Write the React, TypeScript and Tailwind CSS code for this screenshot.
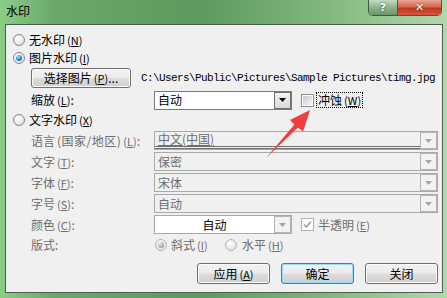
import React from 'react';

const cjk = "font-['Noto_Sans_CJK_SC',sans-serif]";

function Mn({ k }: { k: string }) {
  return (
    <span className="ml-[2px] text-[11px]">
      (<span className="underline">{k}</span>)
    </span>
  );
}

function Radio({ checked, disabled }: { checked?: boolean; disabled?: boolean }) {
  return (
    <span
      className={`flex h-[12px] w-[12px] shrink-0 items-center justify-center rounded-full border bg-[radial-gradient(circle_at_40%_35%,#ffffff,#d6d6d6)] ${
        disabled ? 'border-[#b5b5b5]' : 'border-[#8a8a8a]'
      }`}
    >
      {checked && (
        <span
          className={`h-[6px] w-[6px] rounded-full ${
            disabled
              ? 'bg-[radial-gradient(circle_at_35%_30%,#eeeeee,#9a9a9a_75%)]'
              : 'bg-[radial-gradient(circle_at_35%_30%,#a8e4ff,#1f76c4_65%,#0b4a8e)]'
          }`}
        />
      )}
    </span>
  );
}

function Checkbox({ checked, disabled }: { checked?: boolean; disabled?: boolean }) {
  return (
    <span
      className={`flex h-[13px] w-[13px] shrink-0 items-center justify-center border bg-white ${
        disabled ? 'border-[#b1b1b1]' : 'border-[#8e8f8f]'
      }`}
    >
      {checked ? (
        <svg width="9" height="9" viewBox="0 0 9 9">
          <path d="M1 4.5l2.3 2.5L8 1.5" fill="none" stroke="#a3a3a3" strokeWidth="1.6" />
        </svg>
      ) : (
        <span className="h-[9px] w-[9px] bg-[linear-gradient(135deg,#c6cbd2,#f4f4f4)]" />
      )}
    </span>
  );
}

function Arrow({ disabled }: { disabled?: boolean }) {
  return (
    <span
      className={`flex h-full w-[17px] shrink-0 items-center justify-center border ${
        disabled
          ? 'border-[#b4b4b4] bg-[#f2f2f2]'
          : 'border-[#6f6f6f] bg-[linear-gradient(#f3f3f3,#dadada)]'
      }`}
    >
      <svg width="7" height="4" viewBox="0 0 7 4">
        <path d="M0 0h7L3.5 4z" fill={disabled ? '#a6a6a6' : '#000'} />
      </svg>
    </span>
  );
}

function Select({
  value,
  disabled,
  wide,
  white,
  center,
  doubleLine,
}: {
  value: string;
  disabled?: boolean;
  wide?: boolean;
  white?: boolean;
  center?: boolean;
  doubleLine?: boolean;
}) {
  return (
    <div
      className={`flex h-[19px] items-stretch border ${wide ? 'w-[284px]' : 'w-[138px]'} ${
        disabled ? 'border-[#a9a9a9]' : 'border-[#7a7a7a]'
      } ${white ? 'bg-white' : disabled ? 'bg-[#f0f0f0]' : 'bg-white'}`}
    >
      <div
        className={`flex flex-1 items-center px-[3px] ${center ? 'justify-center' : ''} ${
          disabled && !white ? 'text-[#6d6d6d]' : 'text-black'
        } ${doubleLine ? 'border-b-[3px] border-double border-[#707070]' : ''}`}
      >
        <span className={doubleLine ? 'underline' : ''}>{value}</span>
      </div>
      <Arrow disabled={disabled} />
    </div>
  );
}

function Button({ children, wide, def }: { children: React.ReactNode; wide?: boolean; def?: boolean }) {
  return (
    <div
      className={`flex items-center justify-center rounded-[3px] border bg-[linear-gradient(#f3f3f3_0%,#ebebeb_48%,#dddddd_52%,#cfcfcf_100%)] ${
        wide ? 'h-[20px] w-[100px]' : 'h-[21px] w-[73px]'
      } ${
        def
          ? 'border-[#3c7fb1] shadow-[inset_0_0_0_1px_#98dcfb]'
          : 'border-[#707070] shadow-[inset_0_0_0_1px_#fbfbfb]'
      }`}
    >
      {children}
    </div>
  );
}

function Field({ label, children }: { label: React.ReactNode; children: React.ReactNode }) {
  return (
    <div className="flex h-[21px] items-center pl-[25px] pr-[4px]">
      <div className="w-[123px] shrink-0 whitespace-nowrap text-[#6d6d6d]">{label}</div>
      {children}
    </div>
  );
}

export default function App() {
  return (
    <div
      className={`relative flex h-[298px] w-[447px] flex-col overflow-hidden bg-[linear-gradient(90deg,#8ccd86_0%,#6aa96a_12%,#5c9a5d_45%,#7fb67c_72%,#b2d8ad_100%)] text-[12px] leading-[14px] text-black ${cjk}`}
    >
      {/* Title bar */}
      <div className="flex h-[24px] shrink-0 items-start justify-between">
        <span className="pl-[6px] pt-[4px] text-black">水印</span>
        <div className="mr-[5px] flex h-[16px] overflow-hidden rounded-b-[5px] border border-t-0 border-[#3e5a43]">
          <div className="flex w-[29px] items-center justify-center border-r border-[#3e5a43] bg-[linear-gradient(#c4dcc2,#8fb28e_50%,#6c946c)]">
            <span className="font-['DejaVu_Sans',sans-serif] text-[11px] font-bold leading-[12px] text-white [text-shadow:0_0_2px_#2a3a2a]">
              ?
            </span>
          </div>
          <div className="flex w-[43px] items-center justify-center bg-[linear-gradient(#e9a593,#d46a50_45%,#c0361c_55%,#d4583d)]">
            <span className="font-['DejaVu_Sans',sans-serif] text-[11px] font-bold leading-[12px] text-white [text-shadow:0_0_2px_#5a1a10]">
              ✕
            </span>
          </div>
        </div>
      </div>

      {/* Client area */}
      <div className="ml-[5px] h-[269px] w-[438px] border border-[#4a5f4c] bg-[#f0f0f0] pt-[6px]">
        <div className="flex h-[18px] items-center gap-[4px] pl-[7px]">
          <Radio />
          <span>
            无水印<Mn k="N" />
          </span>
        </div>
        <div className="flex h-[18px] items-center gap-[4px] pl-[7px]">
          <Radio checked />
          <span>
            图片水印<Mn k="I" />
          </span>
        </div>
        <div className="mt-[1px] flex h-[20px] items-center gap-[10px] pl-[25px]">
          <Button wide>
            <span>
              选择图片<Mn k="P" />...
            </span>
          </Button>
          <span className="font-['Liberation_Mono',monospace] text-[11px] tracking-[-0.6px]">
            C:\Users\Public\Pictures\Sample Pictures\timg.jpg
          </span>
        </div>
        <div className="mt-[1px] flex h-[22px] items-center pl-[25px]">
          <div className="w-[123px] shrink-0">
            缩放<Mn k="L" />:
          </div>
          <Select value="自动" />
          <div className="ml-[9px]">
            <Checkbox />
          </div>
          <span className="ml-[2px] border border-dotted border-black px-[1px]">
            冲蚀<Mn k="W" />
          </span>
        </div>
        <div className="flex h-[18px] items-center gap-[4px] pl-[7px]">
          <Radio />
          <span>
            文字水印<Mn k="X" />
          </span>
        </div>
        <div className="mt-[1px]">
          <Field label={<>语言<span className="ml-[2px] tracking-[0.5px]">(国家/地区)</span><Mn k="L" />:</>}>
            <Select value="中文(中国)" disabled wide doubleLine />
          </Field>
          <Field label={<>文字<Mn k="T" />:</>}>
            <Select value="保密" disabled wide />
          </Field>
          <Field label={<>字体<Mn k="F" />:</>}>
            <Select value="宋体" disabled wide />
          </Field>
          <Field label={<>字号<Mn k="S" />:</>}>
            <Select value="自动" disabled wide />
          </Field>
          <Field label={<>颜色<Mn k="C" />:</>}>
            <Select value="自动" disabled white center />
            <div className="ml-[9px]">
              <Checkbox checked disabled />
            </div>
            <span className="ml-[4px] text-[#6d6d6d]">
              半透明<Mn k="E" />
            </span>
          </Field>
        </div>
        <div className="mt-[1px] flex h-[18px] items-center pl-[25px] text-[#6d6d6d]">
          <div className="w-[124px] shrink-0">版式:</div>
          <Radio checked disabled />
          <span className="ml-[4px] w-[54px]">
            斜式<Mn k="I" />
          </span>
          <Radio disabled />
          <span className="ml-[5px]">
            水平<Mn k="H" />
          </span>
        </div>
        <div className="mt-[9px] flex justify-end gap-[11px] pr-[4px]">
          <Button>
            <span>
              应用<Mn k="A" />
            </span>
          </Button>
          <Button def>确定</Button>
          <Button>关闭</Button>
        </div>
      </div>

      {/* Red annotation arrow */}
      <svg className="pointer-events-none absolute left-0 top-0" width="447" height="298" viewBox="0 0 447 298">
        <polygon
          points="266,158 294.5,124.5 290,120 310,110 303,131.5 298,127.5"
          fill="#f23b3b"
        />
      </svg>
    </div>
  );
}
